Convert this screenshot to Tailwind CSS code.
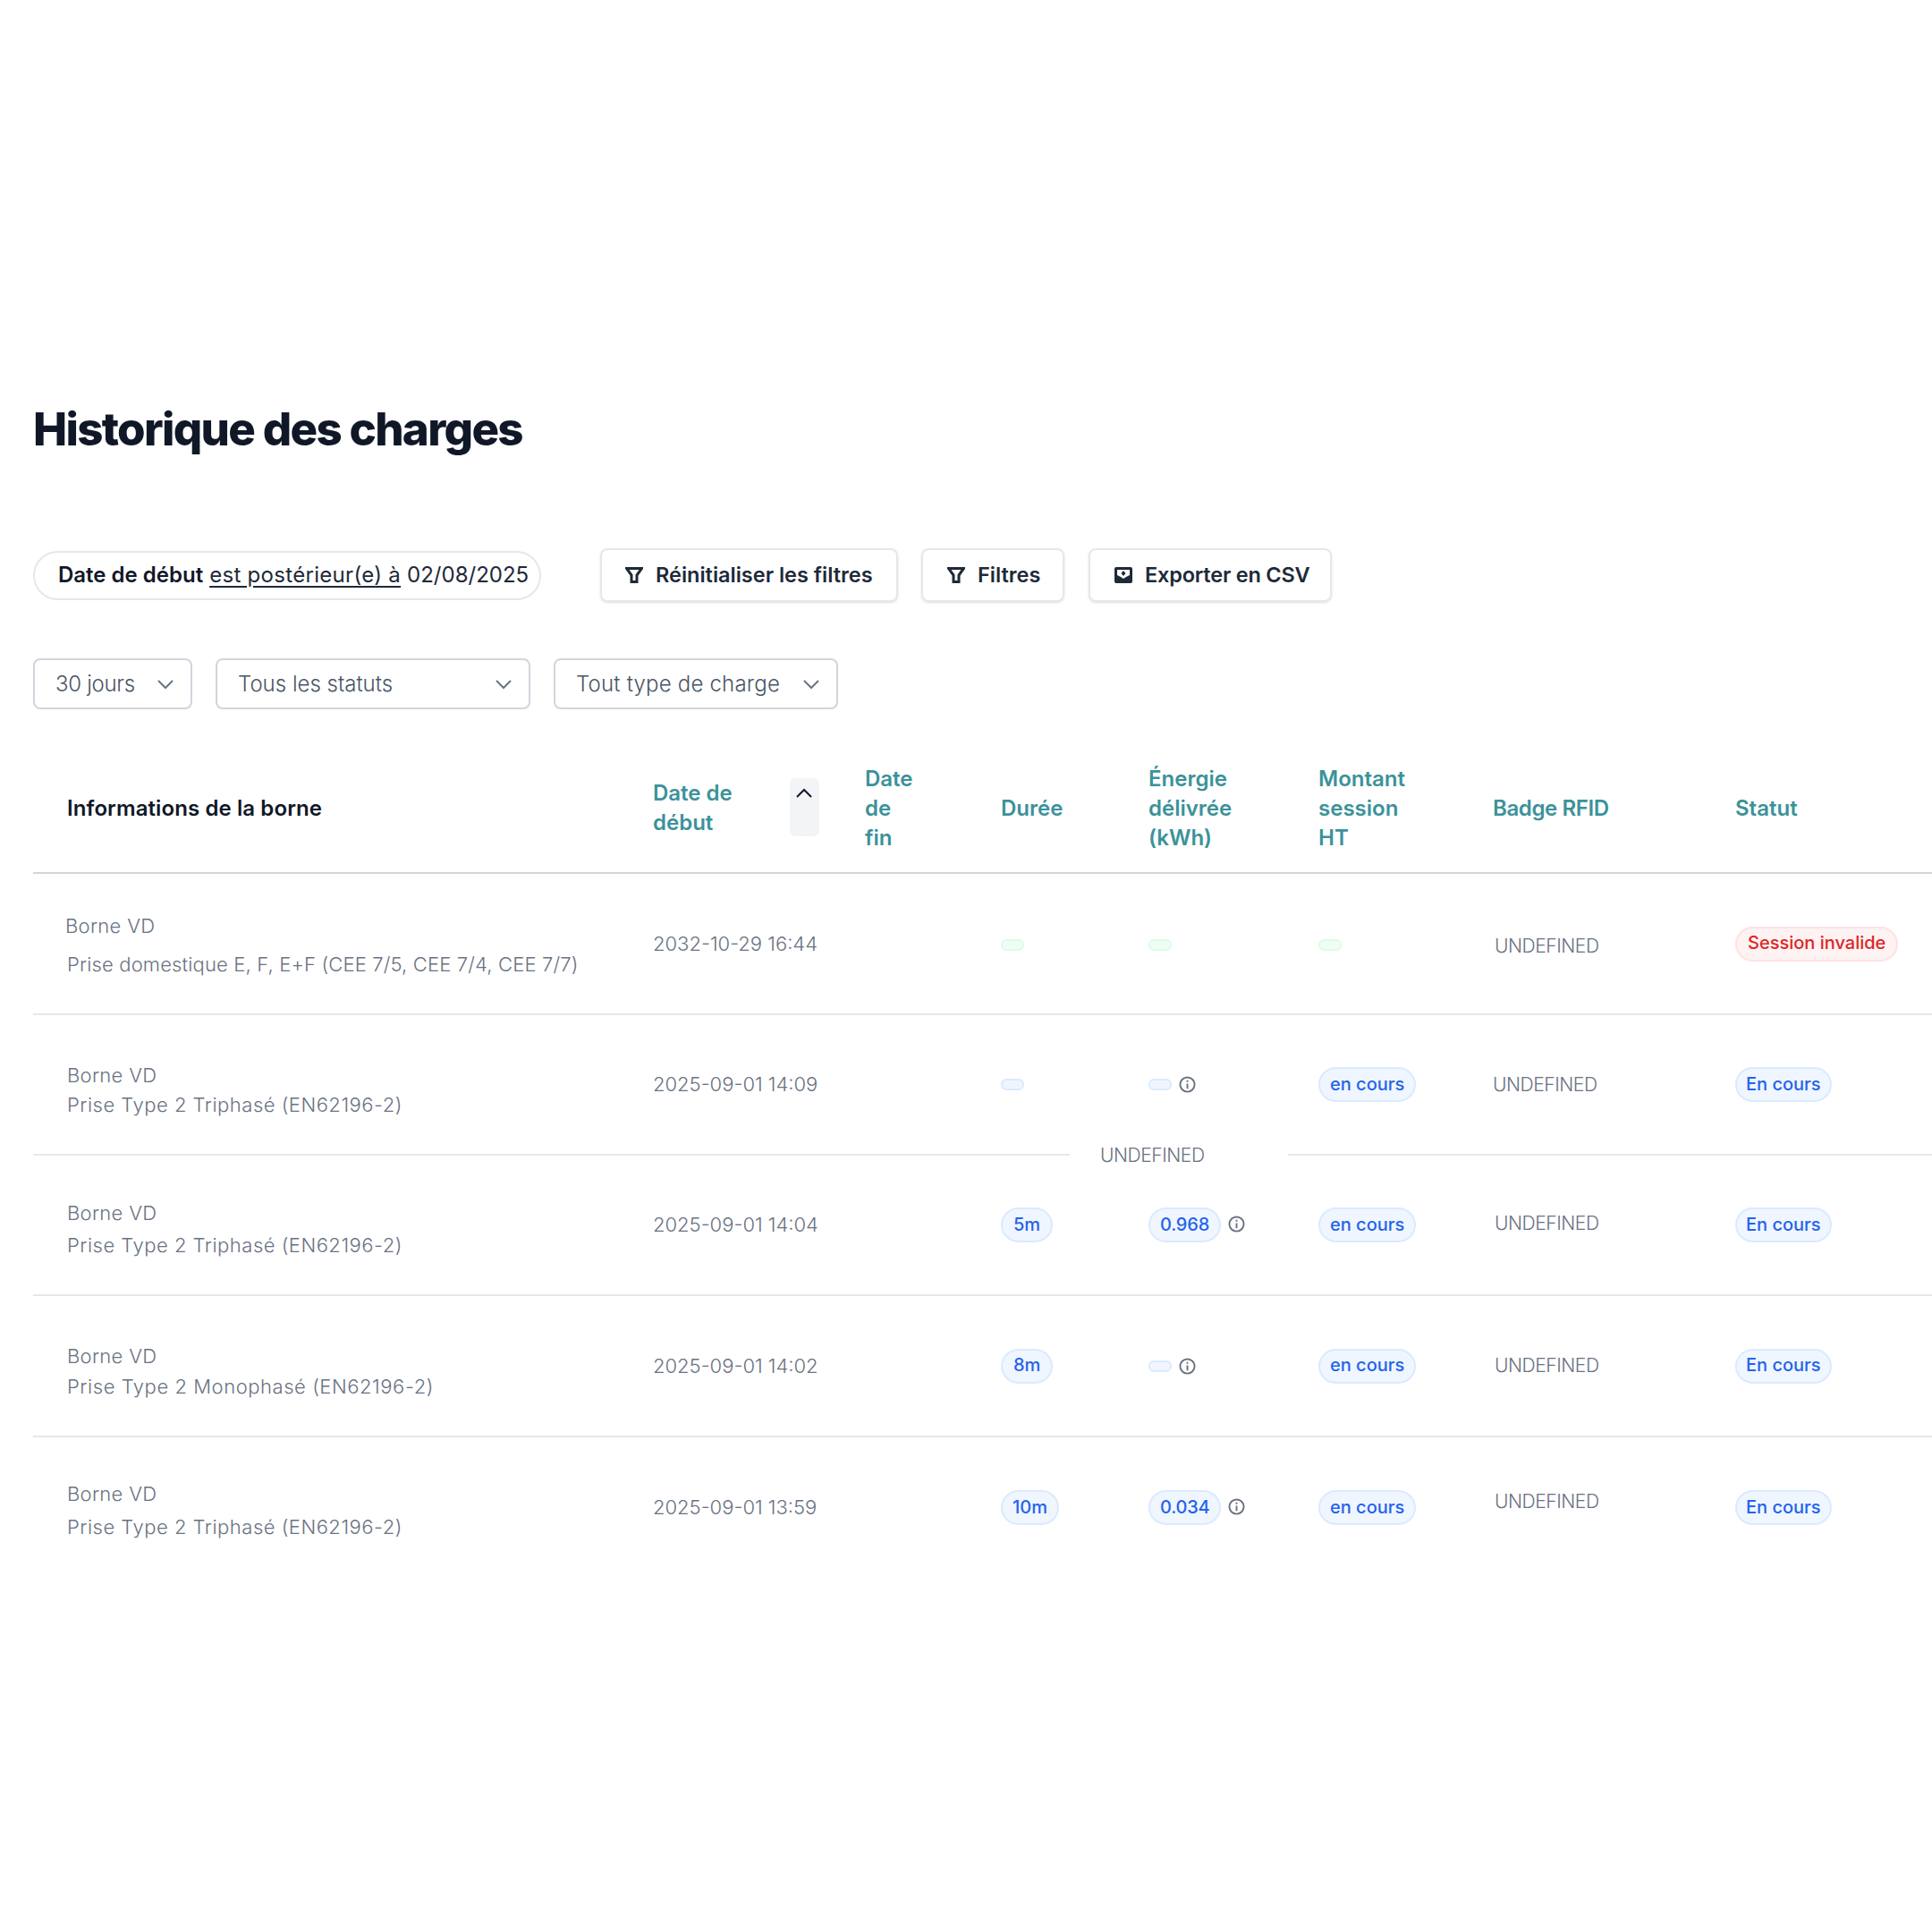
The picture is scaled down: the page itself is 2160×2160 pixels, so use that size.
<!DOCTYPE html>
<html lang="fr">
<head>
    <meta charset="UTF-8">
    <title>Historique des charges</title>
    <script src="https://cdn.jsdelivr.net/npm/@tailwindcss/browser@4"></script>
</head>
<body class="bg-white overflow-hidden font-['Inter',sans-serif] text-gray-500">
    <main class="w-[2160px] h-[2160px] pt-[447px] pl-[37px] relative overflow-hidden">
        <h1 class="h-[66px] leading-[66px] text-[51px] font-extrabold tracking-[-0.033em] text-gray-900">Historique des charges</h1>

        <!-- filtres actifs + actions -->
        <div class="mt-[100px] flex items-center h-[60px]">
            <div class="w-[568px] h-[55px] pl-[26px] flex items-center rounded-full border-2 border-gray-200 text-[24px] text-gray-800 whitespace-nowrap">
                <span class="font-semibold text-gray-900 mr-[7px]">Date de début</span>
                <span class="underline underline-offset-4 mr-[7px] tracking-[0.3px]">est postérieur(e) à</span>
                <span>02/08/2025</span>
            </div>
            <button class="ml-[66px] w-[333px] h-[60px] pl-[26px] flex items-center gap-[14px] rounded-lg border-2 border-gray-200 shadow-sm text-[23.5px] font-semibold text-gray-800">
                <svg class="w-[20px] h-[18px]" viewBox="0 0 20 18" fill="none" stroke="currentColor" stroke-width="3" stroke-linejoin="miter"><path d="M1.5 1.5h17l-5.5 7.5v7.5h-6V9z"/></svg>
                Réinitialiser les filtres
            </button>
            <button class="ml-[26px] w-[160px] h-[60px] pl-[27px] flex items-center gap-[14px] rounded-lg border-2 border-gray-200 shadow-sm text-[23.5px] font-semibold text-gray-800">
                <svg class="w-[20px] h-[18px]" viewBox="0 0 20 18" fill="none" stroke="currentColor" stroke-width="3" stroke-linejoin="miter"><path d="M1.5 1.5h17l-5.5 7.5v7.5h-6V9z"/></svg>
                Filtres
            </button>
            <button class="ml-[27px] w-[272px] h-[60px] pl-[27px] flex items-center gap-[14px] rounded-lg border-2 border-gray-200 shadow-sm text-[23.5px] tracking-[-0.2px] font-semibold text-gray-800">
                <svg class="w-[20px] h-[18px]" viewBox="0 0 20 18"><rect width="20" height="18" rx="2" fill="currentColor"/><path d="M3 3h14v6l-4 2-3 2-3-2-4-2z" fill="#fff"/><path d="M10 4l2.5 3-2.5 3-2.5-3z" fill="currentColor"/></svg>
                Exporter en CSV
            </button>
        </div>

        <!-- listes deroulantes -->
        <div class="mt-[63px] flex gap-[26px] text-[24px] font-light text-gray-600">
            <button class="w-[178px] h-[57px] pl-[23px] pr-[19px] flex items-center justify-between rounded-lg border-2 border-gray-300">
                <span class="tracking-[-0.3px]">30 jours</span>
                <svg class="w-[18px] h-[18px] text-gray-500" viewBox="0 0 18 18" fill="none" stroke="currentColor" stroke-width="2"><path d="M1 5l8 8 8-8"/></svg>
            </button>
            <button class="w-[352px] h-[57px] pl-[23px] pr-[19px] flex items-center justify-between rounded-lg border-2 border-gray-300">
                Tous les statuts
                <svg class="w-[18px] h-[18px] text-gray-500" viewBox="0 0 18 18" fill="none" stroke="currentColor" stroke-width="2"><path d="M1 5l8 8 8-8"/></svg>
            </button>
            <button class="w-[318px] h-[57px] pl-[23px] pr-[19px] flex items-center justify-between rounded-lg border-2 border-gray-300">
                <span class="tracking-[0.2px]">Tout type de charge</span>
                <svg class="w-[18px] h-[18px] text-gray-500" viewBox="0 0 18 18" fill="none" stroke="currentColor" stroke-width="2"><path d="M1 5l8 8 8-8"/></svg>
            </button>
        </div>

        <table class="mt-[37px] w-[2123px] table-fixed text-[22px] font-light text-left">
            <colgroup>
                <col class="w-[655px]"><col class="w-[237px]"><col class="w-[152px]"><col class="w-[165px]">
                <col class="w-[190px]"><col class="w-[195px]"><col class="w-[271px]"><col class="w-[258px]">
            </colgroup>
            <thead class="text-[#3b929a] text-[24px] leading-[33px]">
                <tr class="h-[146px] border-b-2 border-gray-300">
                    <th class="pl-[38px] pt-[2px] font-semibold text-gray-900 tracking-[0.1px]">Informations de la borne</th>
                    <th class="pl-[38px] font-semibold">
                        <div class="flex items-center justify-between pr-[13px]">
                            <span class="w-[120px]">Date de début</span>
                            <span class="w-[33px] h-[65px] pt-[8px] pr-[1px] flex justify-center rounded-md bg-gray-100">
                                <svg class="w-[18px] h-[18px] text-gray-900" viewBox="0 0 18 18" fill="none" stroke="currentColor" stroke-width="2"><path d="M1 13l8-8 8 8"/></svg>
                            </span>
                        </div>
                    </th>
                    <th class="pl-[38px] pt-[2px] font-semibold">Date<br>de<br>fin</th>
                    <th class="pl-[38px] pt-[2px] font-semibold">Durée</th>
                    <th class="pl-[38px] pt-[2px] font-semibold">Énergie<br>délivrée<br>(kWh)</th>
                    <th class="pl-[38px] pt-[2px] font-semibold">Montant<br>session<br>HT</th>
                    <th class="pl-[38px] pt-[2px] font-semibold tracking-[-0.4px]">Badge RFID</th>
                    <th class="pl-[38px] pt-[2px] font-semibold">Statut</th>
                </tr>
            </thead>
            <tbody>
                <tr class="h-[158px] border-b-2 border-gray-200">
                    <td class="pl-[38px] pt-[3px]"><div class="-ml-[2px] leading-[33px] tracking-[0.3px]">Borne VD</div><div class="mt-[10px] leading-[33px] tracking-[0.15px]">Prise domestique E, F, E+F (CEE 7/5, CEE 7/4, CEE 7/7)</div></td>
                    <td class="pl-[38px]">2032-10-29 16:44</td>
                    <td class="pl-[38px]"></td>
                    <td class="pl-[38px]"><span class="block mt-[2px] w-[26px] h-[13px] rounded-md border-2 border-green-100 bg-green-50"></span></td>
                    <td class="pl-[38px]"><span class="block mt-[2px] w-[26px] h-[13px] rounded-md border-2 border-green-100 bg-green-50"></span></td>
                    <td class="pl-[38px]"><span class="block mt-[2px] w-[26px] h-[13px] rounded-md border-2 border-green-100 bg-green-50"></span></td>
                    <td class="pl-[40px] pt-[5px] text-[21px] tracking-[-0.02em]">UNDEFINED</td>
                    <td class="pl-[38px]"><span class="inline-flex items-center h-[39px] px-[12px] pb-[2px] rounded-full border-2 border-red-100 bg-red-50 text-[20px] font-medium text-[#dc2626] whitespace-nowrap">Session invalide</span></td>
                </tr>
                <tr class="h-[157px] border-b-2 border-gray-200">
                    <td class="pl-[38px] pt-[12px]"><div class="leading-[33px] tracking-[0.3px]">Borne VD</div><div class="leading-[33px] tracking-[0.5px]">Prise Type 2 Triphasé (EN62196-2)</div></td>
                    <td class="pl-[38px]">2025-09-01 14:09</td>
                    <td class="pl-[38px]"></td>
                    <td class="pl-[38px]"><span class="block w-[26px] h-[13px] rounded-md border-2 border-blue-100 bg-blue-50"></span></td>
                    <td class="pl-[38px]">
                        <div class="flex items-center gap-[8px]">
                            <span class="block w-[26px] h-[13px] rounded-md border-2 border-blue-100 bg-blue-50"></span>
                            <svg class="w-[19px] h-[19px] -mt-[1px]" viewBox="0 0 20 20" fill="none" stroke="#6b7280" stroke-width="2"><circle cx="10" cy="10" r="8.5"/><path d="M10 9v6M10 5v2"/></svg>
                        </div>
                    </td>
                    <td class="pl-[38px]"><span class="inline-flex items-center h-[39px] px-[11px] pb-[2px] rounded-full border-2 border-blue-100 bg-blue-50 text-[20px] font-medium text-[#2563eb] whitespace-nowrap">en cours</span></td>
                    <td class="pl-[38px] text-[21px] tracking-[-0.02em]">UNDEFINED</td>
                    <td class="pl-[38px]"><span class="inline-flex items-center h-[39px] px-[10px] pb-[2px] rounded-full border-2 border-blue-100 bg-blue-50 text-[20px] font-medium text-[#2563eb] whitespace-nowrap">En cours</span></td>
                </tr>
                <tr class="h-[157px] border-b-2 border-gray-200">
                    <td class="pl-[38px] pt-[10px]"><div class="leading-[33px] tracking-[0.3px]">Borne VD</div><div class="mt-[3px] leading-[33px] tracking-[0.5px]">Prise Type 2 Triphasé (EN62196-2)</div></td>
                    <td class="pl-[38px]">2025-09-01 14:04</td>
                    <td class="pl-[38px]"></td>
                    <td class="pl-[38px]"><span class="inline-flex items-center h-[39px] px-[12px] pb-[2px] rounded-full border-2 border-blue-100 bg-blue-50 text-[20px] font-medium text-[#2563eb] whitespace-nowrap">5m</span></td>
                    <td class="pl-[38px]">
                        <div class="flex items-center gap-[8px]">
                            <span class="inline-flex items-center h-[39px] px-[11px] pb-[2px] tracking-[-0.2px] rounded-full border-2 border-blue-100 bg-blue-50 text-[20px] font-medium text-[#2563eb] whitespace-nowrap">0.968</span>
                            <svg class="w-[19px] h-[19px] -mt-[2px]" viewBox="0 0 20 20" fill="none" stroke="#6b7280" stroke-width="2"><circle cx="10" cy="10" r="8.5"/><path d="M10 9v6M10 5v2"/></svg>
                        </div>
                    </td>
                    <td class="pl-[38px]"><span class="inline-flex items-center h-[39px] px-[11px] pb-[2px] rounded-full border-2 border-blue-100 bg-blue-50 text-[20px] font-medium text-[#2563eb] whitespace-nowrap">en cours</span></td>
                    <td class="pl-[40px] pb-[3px] text-[21px] tracking-[-0.02em]">UNDEFINED</td>
                    <td class="pl-[38px]"><span class="inline-flex items-center h-[39px] px-[10px] pb-[2px] rounded-full border-2 border-blue-100 bg-blue-50 text-[20px] font-medium text-[#2563eb] whitespace-nowrap">En cours</span></td>
                </tr>
                <tr class="h-[158px] border-b-2 border-gray-200">
                    <td class="pl-[38px] pt-[12px]"><div class="leading-[33px] tracking-[0.3px]">Borne VD</div><div class="mt-[1px] leading-[33px] tracking-[0.55px]">Prise Type 2 Monophasé (EN62196-2)</div></td>
                    <td class="pl-[38px]">2025-09-01 14:02</td>
                    <td class="pl-[38px]"></td>
                    <td class="pl-[38px]"><span class="inline-flex items-center h-[39px] px-[12px] pb-[2px] rounded-full border-2 border-blue-100 bg-blue-50 text-[20px] font-medium text-[#2563eb] whitespace-nowrap">8m</span></td>
                    <td class="pl-[38px]">
                        <div class="flex items-center gap-[8px]">
                            <span class="block w-[26px] h-[13px] rounded-md border-2 border-blue-100 bg-blue-50"></span>
                            <svg class="w-[19px] h-[19px]" viewBox="0 0 20 20" fill="none" stroke="#6b7280" stroke-width="2"><circle cx="10" cy="10" r="8.5"/><path d="M10 9v6M10 5v2"/></svg>
                        </div>
                    </td>
                    <td class="pl-[38px]"><span class="inline-flex items-center h-[39px] px-[11px] pb-[2px] rounded-full border-2 border-blue-100 bg-blue-50 text-[20px] font-medium text-[#2563eb] whitespace-nowrap">en cours</span></td>
                    <td class="pl-[40px] text-[21px] tracking-[-0.02em]">UNDEFINED</td>
                    <td class="pl-[38px]"><span class="inline-flex items-center h-[39px] px-[10px] pb-[2px] rounded-full border-2 border-blue-100 bg-blue-50 text-[20px] font-medium text-[#2563eb] whitespace-nowrap">En cours</span></td>
                </tr>
                <tr class="h-[158px]">
                    <td class="pl-[38px] pt-[7px]"><div class="leading-[33px] tracking-[0.3px]">Borne VD</div><div class="mt-[4px] leading-[33px] tracking-[0.5px]">Prise Type 2 Triphasé (EN62196-2)</div></td>
                    <td class="pl-[38px]">2025-09-01 13:59</td>
                    <td class="pl-[38px]"></td>
                    <td class="pl-[38px]"><span class="inline-flex items-center h-[39px] px-[11px] pb-[2px] rounded-full border-2 border-blue-100 bg-blue-50 text-[20px] font-medium text-[#2563eb] whitespace-nowrap">10m</span></td>
                    <td class="pl-[38px]">
                        <div class="flex items-center gap-[8px]">
                            <span class="inline-flex items-center h-[39px] px-[11px] pb-[2px] tracking-[-0.2px] rounded-full border-2 border-blue-100 bg-blue-50 text-[20px] font-medium text-[#2563eb] whitespace-nowrap">0.034</span>
                            <svg class="w-[19px] h-[19px] -mt-[2px]" viewBox="0 0 20 20" fill="none" stroke="#6b7280" stroke-width="2"><circle cx="10" cy="10" r="8.5"/><path d="M10 9v6M10 5v2"/></svg>
                        </div>
                    </td>
                    <td class="pl-[38px]"><span class="inline-flex items-center h-[39px] px-[11px] pb-[2px] rounded-full border-2 border-blue-100 bg-blue-50 text-[20px] font-medium text-[#2563eb] whitespace-nowrap">en cours</span></td>
                    <td class="pl-[40px] pb-[14px] text-[21px] tracking-[-0.02em]">UNDEFINED</td>
                    <td class="pl-[38px]"><span class="inline-flex items-center h-[39px] px-[10px] pb-[2px] rounded-full border-2 border-blue-100 bg-blue-50 text-[20px] font-medium text-[#2563eb] whitespace-nowrap">En cours</span></td>
                </tr>
            </tbody>
        </table>

        <!-- texte pose sur le separateur entre deux lignes -->
        <div class="absolute left-[1196px] top-[1275px] w-[244px] h-[34px] pl-[34px] bg-white leading-[34px] text-[21px] font-light tracking-[-0.02em]">UNDEFINED</div>
    </main>
</body>
</html>
